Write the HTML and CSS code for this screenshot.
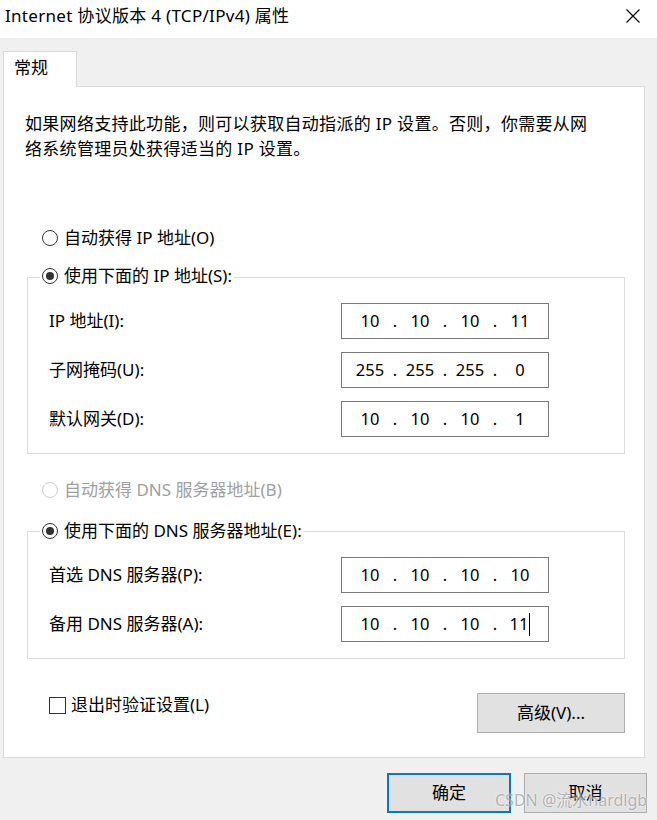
FILE: index.html
```html
<!DOCTYPE html>
<html lang="zh-CN">
<head>
<meta charset="utf-8">
<title>Internet 协议版本 4 (TCP/IPv4) 属性</title>
<link rel="stylesheet" href="styles.css">
</head>
<body>
<div class="window">
  <div class="titlebar">
    <span class="title">Internet 协议版本 4 (TCP/IPv4) 属性</span>
    <svg class="close" width="16" height="16" viewBox="0 0 16 16"><path d="M1.5 1.5 L14.5 14.5 M14.5 1.5 L1.5 14.5" stroke="#000" stroke-width="1.1" fill="none"/></svg>
  </div>
  <div class="client">
    <div class="tabs"><div class="tab">常规</div></div>
    <div class="panel">
      <p class="desc">如果网络支持此功能，则可以获取自动指派的 IP 设置。否则，你需要从网<br>络系统管理员处获得适当的 IP 设置。</p>

      <div class="radio-row first"><span class="radio"></span><span>自动获得 IP 地址(O)</span></div>

      <div class="group g1">
        <div class="legend"><span class="radio checked"></span><span>使用下面的 IP 地址(S):</span></div>
        <div class="field"><span class="label">IP 地址(I):</span>
          <div class="ip"><span class="seg">10</span><span class="dot">.</span><span class="seg">10</span><span class="dot">.</span><span class="seg">10</span><span class="dot">.</span><span class="seg">11</span></div></div>
        <div class="field"><span class="label">子网掩码(U):</span>
          <div class="ip"><span class="seg">255</span><span class="dot">.</span><span class="seg">255</span><span class="dot">.</span><span class="seg">255</span><span class="dot">.</span><span class="seg">0</span></div></div>
        <div class="field"><span class="label">默认网关(D):</span>
          <div class="ip"><span class="seg">10</span><span class="dot">.</span><span class="seg">10</span><span class="dot">.</span><span class="seg">10</span><span class="dot">.</span><span class="seg">1</span></div></div>
      </div>

      <div class="radio-row disabled"><span class="radio"></span><span>自动获得 DNS 服务器地址(B)</span></div>

      <div class="group g2">
        <div class="legend"><span class="radio checked"></span><span>使用下面的 DNS 服务器地址(E):</span></div>
        <div class="field"><span class="label">首选 DNS 服务器(P):</span>
          <div class="ip"><span class="seg">10</span><span class="dot">.</span><span class="seg">10</span><span class="dot">.</span><span class="seg">10</span><span class="dot">.</span><span class="seg">10</span></div></div>
        <div class="field"><span class="label">备用 DNS 服务器(A):</span>
          <div class="ip"><span class="seg">10</span><span class="dot">.</span><span class="seg">10</span><span class="dot">.</span><span class="seg">10</span><span class="dot">.</span><span class="seg">11<span class="caret"></span></span></div></div>
      </div>

      <div class="bottom-row">
        <div class="check-row"><span class="checkbox"></span><span>退出时验证设置(L)</span></div>
        <button class="btn adv">高级(V)...</button>
      </div>
    </div>
    <div class="footer">
      <button class="btn default">确定</button>
      <button class="btn">取消</button>
    </div>
    <span class="watermark">CSDN @流水hardlgb</span>
  </div>
</div>
</body>
</html>
```
FILE: styles.css
```css
* { box-sizing: border-box; }
html, body {
  margin: 0;
  padding: 0;
}
body {
  width: 657px;
  height: 820px;
  overflow: hidden;
  background: #f0f0f0;
  font-family: "Noto Sans", "Noto Sans CJK SC", sans-serif;
  font-size: 17px;
  color: #000;
}
.window {
  width: 657px;
  height: 820px;
}
.titlebar {
  height: 38px;
  background: #fff;
  display: flex;
  justify-content: space-between;
  align-items: flex-start;
  padding: 4px 16px 0 5px;
}
.title {
  line-height: 24px;
  font-size: 17px;
  letter-spacing: 0.3px;
}
.close {
  margin-top: 4px;
}
.client {
  position: relative;
  height: 782px;
  background: #f0f0f0;
}
.tabs {
  padding: 13px 0 0 3px;
  display: flex;
}
.tab {
  position: relative;
  z-index: 1;
  width: 74px;
  height: 36px;
  margin-bottom: -1px;
  background: #fff;
  border: 1px solid #d9d9d9;
  border-bottom: none;
  padding: 4px 0 0 10px;
  line-height: 24px;
}
.panel {
  margin-left: 3px;
  width: 642px;
  height: 672px;
  background: #fff;
  border: 1px solid #d9d9d9;
}
.desc {
  margin: 24px 0 0 21px;
  line-height: 25px;
  white-space: nowrap;
  letter-spacing: 0.3px;
}
.radio-row {
  display: flex;
  align-items: center;
  height: 24px;
  margin-left: 38px;
  gap: 6px;
  line-height: 24px;
}
.radio-row.first { margin-top: 65px; }
.radio-row.disabled { margin-top: 24px; color: #a0a0a0; }
.radio {
  width: 16px;
  height: 16px;
  border: 1px solid #333;
  border-radius: 50%;
  display: flex;
  align-items: center;
  justify-content: center;
  flex: none;
}
.radio.checked::after {
  content: "";
  width: 8px;
  height: 8px;
  border-radius: 50%;
  background: #333;
}
.disabled .radio { border-color: #cccccc; }
.group {
  margin-left: 23px;
  width: 598px;
  border: 1px solid #dcdcdc;
  padding-bottom: 16px;
}
.g1 { margin-top: 27px; }
.g2 { margin-top: 29px; }
.legend {
  display: flex;
  width: fit-content;
  align-items: center;
  gap: 6px;
  height: 24px;
  line-height: 24px;
  background: #fff;
  margin-left: 12px;
  padding: 0 2px;
}
.g1 .legend { margin-top: -14px; }
.g2 .legend { margin-top: -13px; }
.field {
  display: flex;
  align-items: center;
  padding-left: 21px;
  margin-top: 13px;
}
.g1 .legend + .field { margin-top: 15px; }
.g2 .legend + .field { margin-top: 14px; }
.label {
  width: 292px;
  line-height: 24px;
}
.ip {
  width: 208px;
  height: 36px;
  border: 1px solid #7a7a7a;
  display: flex;
  align-items: center;
  padding-left: 8px;
  font-size: 16.5px;
  line-height: 24px;
}
.seg {
  width: 40px;
  text-align: center;
  display: flex;
  justify-content: center;
  align-items: center;
}
.dot {
  width: 10px;
  text-align: center;
}
.caret {
  display: inline-block;
  width: 1px;
  height: 23px;
  background: #000;
  margin-left: 1px;
}
.bottom-row {
  display: flex;
  justify-content: space-between;
  align-items: flex-start;
  margin-top: 34px;
  padding: 0 19px 0 45px;
}
.check-row {
  display: flex;
  align-items: center;
  gap: 5px;
  height: 24px;
  line-height: 24px;
}
.checkbox {
  width: 17px;
  height: 17px;
  border: 1px solid #333;
  background: #fff;
}
.btn {
  font-family: inherit;
  font-size: 17px;
  color: #000;
  background: #e1e1e1;
  border: 1px solid #adadad;
  width: 123px;
  height: 40px;
  padding: 0;
  line-height: 24px;
}
.btn.adv {
  width: 148px;
}
.btn.default {
  border: 2px solid #0078d7;
  width: 124px;
}
.footer {
  display: flex;
  justify-content: flex-end;
  gap: 13px;
  margin-top: 15px;
  padding-right: 10px;
}
.watermark {
  position: absolute;
  left: 495px;
  top: 750px;
  font-size: 16px;
  line-height: 24px;
  color: rgba(120, 120, 120, 0.55);
  text-shadow: 0 0 2px #fff;
  pointer-events: none;
}
```
